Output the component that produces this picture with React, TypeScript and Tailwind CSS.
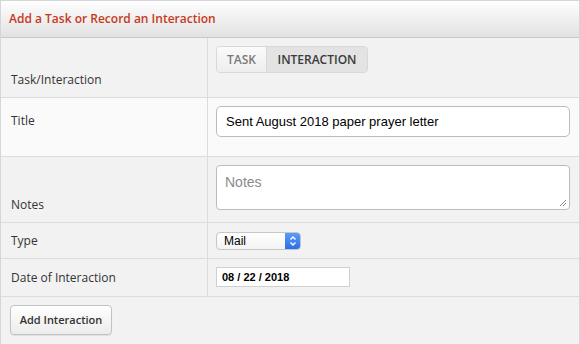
import React from "react";

const labelFont = { fontFamily: '"Open Sans", "Noto Sans", sans-serif' };

const Row: React.FC<{
  label: string;
  className: string;
  labelClass: string;
  children: React.ReactNode;
}> = ({ label, className, labelClass, children }) => (
  <div className={`grid grid-cols-[207px_1fr] border-b border-[#dcdcdc] ${className}`}>
    <div
      className={`flex border-r border-[#dcdcdc] pl-[10px] text-[12px] leading-[18px] text-[#333] ${labelClass}`}
      style={labelFont}
    >
      {label}
    </div>
    <div className="relative pl-[8px] pr-[9px]">{children}</div>
  </div>
);

export default function App() {
  return (
    <div className="w-[580px] h-[344px] overflow-hidden bg-[#f2f2f2] border border-[#d6d6d6] border-b-0 flex flex-col">
      <div className="h-[37px] shrink-0 border-b border-[#c9c9c9] bg-gradient-to-b from-[#fefefe] to-[#e2e2e2] flex items-center pl-[8px]">
        <h3
          className="text-[12px] font-semibold text-[#c53a1c] leading-none"
          style={labelFont}
        >
          Add a Task or Record an Interaction
        </h3>
      </div>

      <Row label="Task/Interaction" className="h-[60px] bg-[#f2f2f2]" labelClass="items-end pb-[8px]">
        <div
          className="mt-[8px] inline-flex h-[27px] rounded-[4px] border border-[#d8d8d8] overflow-hidden text-[12px] font-semibold"
          style={labelFont}
        >
          <span className="w-[50px] flex items-center justify-center bg-gradient-to-b from-[#fafafa] to-[#eeeeee] text-[#7a7a7a] border-r border-[#d8d8d8]">
            TASK
          </span>
          <span className="w-[100px] flex items-center justify-center bg-[#e3e3e3] text-[#3a3a3a]">
            INTERACTION
          </span>
        </div>
      </Row>

      <Row label="Title" className="h-[59px] bg-[#fafafa]" labelClass="items-start pt-[14px]">
        <div
          className="mt-[8px] h-[31px] rounded-[5px] border border-[#bcbcbc] bg-white flex items-center px-[9px] text-[13px] text-black"
          style={{ fontFamily: '"Liberation Sans", Arial, sans-serif' }}
        >
          Sent August 2018 paper prayer letter
        </div>
      </Row>

      <Row label="Notes" className="h-[66px] bg-[#f2f2f2]" labelClass="items-end pb-[8px]">
        <div
          className="relative mt-[8px] h-[45px] rounded-[4px] border border-[#bcbcbc] bg-white px-[8px] pt-[6px] text-[14px] text-[#8a8a8a]"
          style={{ fontFamily: '"Liberation Sans", Arial, sans-serif' }}
        >
          Notes
          <svg className="absolute right-[2px] bottom-[2px]" width="8" height="8" viewBox="0 0 8 8">
            <path d="M7 1L1 7M7 4L4 7" stroke="#888" strokeWidth="1" />
          </svg>
        </div>
      </Row>

      <Row label="Type" className="h-[36px] bg-[#f2f2f2]" labelClass="items-center">
        <div
          className="mt-[9px] w-[85px] h-[18px] rounded-[4px] border border-[#c6c6c6] bg-gradient-to-b from-white to-[#f3f3f3] flex items-center overflow-hidden text-[12px] text-black"
          style={{ fontFamily: '"Liberation Sans", Arial, sans-serif' }}
        >
          <span className="flex-1 pl-[7px]">Mail</span>
          <span className="w-[15px] h-full bg-gradient-to-b from-[#5a9cf8] to-[#2d6ee8] flex items-center justify-center">
            <svg width="8" height="12" viewBox="0 0 8 12">
              <path d="M1.5 4.5L4 2L6.5 4.5M1.5 7.5L4 10L6.5 7.5" stroke="white" strokeWidth="1.4" fill="none" />
            </svg>
          </span>
        </div>
      </Row>

      <Row label="Date of Interaction" className="h-[38px] bg-[#f2f2f2]" labelClass="items-center">
        <div
          className="mt-[8px] w-[134px] h-[20px] border border-[#d0d0d0] bg-white flex items-center pl-[5px] text-[11px] font-semibold text-black"
          style={{ fontFamily: '"Liberation Sans", Arial, sans-serif' }}
        >
          08 / 22 / 2018
        </div>
      </Row>

      <div className="flex-1 px-[9px] pt-[8px]">
        <button
          type="button"
          className="w-[102px] h-[30px] rounded-[4px] border border-[#c2c2c2] bg-gradient-to-b from-white to-[#ececec] shadow-[0_1px_1px_rgba(0,0,0,0.08)] text-[11px] font-semibold text-[#333]"
          style={labelFont}
        >
          Add Interaction
        </button>
      </div>
    </div>
  );
}
